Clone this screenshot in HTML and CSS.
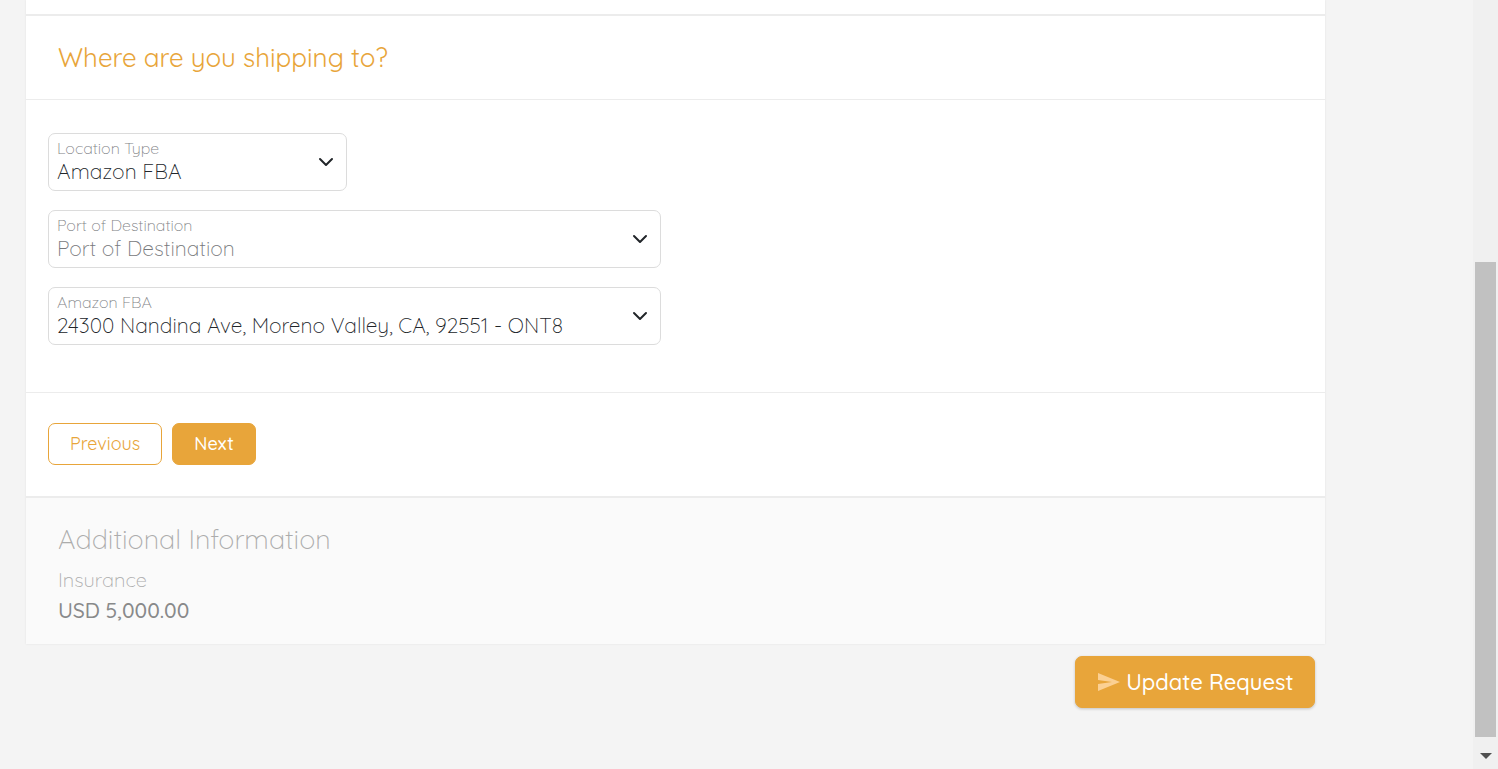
FILE: index.html
```html
<!DOCTYPE html>
<html lang="en">
<head>
  <meta charset="UTF-8">
  <meta name="viewport" content="width=device-width, initial-scale=1">
  <title>Shipping Request</title>
  <link rel="stylesheet" href="styles.css">
</head>
<body>

  <main class="page">
    <div class="card">
      <!-- End of the previous step -->
      <div class="step-end"></div>

      <!-- Destination step -->
      <form class="step">
        <h2 class="step-title">Where are you shipping to?</h2>

        <div class="step-body">
          <div class="field">
            <label for="locationType">Location Type</label>
            <select id="locationType">
              <option>Amazon FBA</option>
            </select>
            <svg class="chevron" viewBox="0 0 16 16"><path d="M2 5l6 6 6-6"/></svg>
          </div>
          <div class="field field-wide">
            <label for="port">Port of Destination</label>
            <select id="port" class="empty">
              <option>Port of Destination</option>
            </select>
            <svg class="chevron" viewBox="0 0 16 16"><path d="M2 5l6 6 6-6"/></svg>
          </div>
          <div class="field field-wide">
            <label for="fba">Amazon FBA</label>
            <select id="fba">
              <option>24300 Nandina Ave, Moreno Valley, CA, 92551 - ONT8</option>
            </select>
            <svg class="chevron" viewBox="0 0 16 16"><path d="M2 5l6 6 6-6"/></svg>
          </div>
        </div>

        <div class="step-footer">
          <button type="button" class="btn btn-outline">Previous</button>
          <button type="button" class="btn btn-primary">Next</button>
        </div>
      </form>

      <!-- Collapsed step -->
      <section class="summary">
        <h2>Additional Information</h2>
        <p class="summary-label">Insurance</p>
        <p class="summary-value">USD 5,000.00</p>
      </section>
    </div>

    <div class="actions">
      <button type="button" class="btn btn-primary btn-large">
        <svg class="send" viewBox="0 0 24 20"><path d="M1 1l22 9-22 9v-7l14-2-14-2z"/></svg>
        Update Request
      </button>
    </div>
  </main>

  <!-- Scrollbar -->
  <div class="scrollbar">
    <div class="thumb"></div>
    <svg class="arrow" viewBox="0 0 12 6"><path d="M0 0h12l-6 6z"/></svg>
  </div>

</body>
</html>
```

FILE: styles.css
```css
* {
  margin: 0;
  padding: 0;
  box-sizing: border-box;
}

body {
  display: flex;
  min-height: 100vh;
  background: #f4f4f4;
  color: #212529;
  font-family: Quicksand, Lato, sans-serif;
  font-weight: 300;
}

.page {
  flex: 1;
  padding: 0 9.85% 0 26px;
}

/* Card with the steps */
.card {
  background: #fff;
  box-shadow: 0 0 2px rgba(0, 0, 0, 0.08);
}

.step-end {
  height: 16px;
  border-bottom: 2px solid #ececec;
}

.step-title {
  padding: 24px 32px;
  border-bottom: 1px solid #ececec;
  color: #e8a53a;
  font-size: 26px;
  font-weight: 400;
  line-height: 35px;
}

.step-body {
  display: grid;
  grid-template-columns: repeat(4, 1fr);
  gap: 19px 15px;
  padding: 33px 37px 47px 22px;
}

/* Select with its label inside the border */
.field {
  position: relative;
  grid-column: 1 / span 1;
}

.field-wide {
  grid-column: 1 / span 2;
}

.field label {
  position: absolute;
  top: 5px;
  left: 9px;
  color: #808285;
  font-size: 16px;
  line-height: 20px;
}

.field select {
  display: block;
  width: 100%;
  height: 58px;
  padding: 18px 40px 0 8px;
  border: 1px solid #dcdcdc;
  border-radius: 7px;
  background: #fff;
  color: #212529;
  font-family: inherit;
  font-size: 21px;
  font-weight: 300;
  appearance: none;
}

.field select.empty {
  color: #77797c;
}

.chevron {
  position: absolute;
  top: 21px;
  right: 13px;
  width: 16px;
  height: 16px;
  fill: none;
  stroke: #212529;
  stroke-width: 2;
  stroke-linecap: round;
  stroke-linejoin: round;
  pointer-events: none;
}

.step-footer {
  display: flex;
  gap: 10px;
  padding: 30px 22px 31px;
  border-top: 1px solid #ececec;
  border-bottom: 2px solid #ececec;
}

/* Buttons */
.btn {
  height: 42px;
  padding: 0 21px 1px;
  border: 1px solid #e8a53a;
  border-radius: 7px;
  font-family: inherit;
  font-size: 18px;
  font-weight: 500;
  cursor: pointer;
}

.btn-outline {
  background: #fff;
  color: #e8a53a;
  font-weight: 400;
}

.btn-primary {
  background: #e8a53a;
  color: #fff;
}

.btn-large {
  display: flex;
  align-items: center;
  gap: 5px;
  height: 52px;
  font-size: 22px;
  box-shadow: 0 1px 3px rgba(0, 0, 0, 0.2);
}

.send {
  width: 24px;
  height: 20px;
  fill: #fbd093;
}

/* Collapsed step */
.summary {
  padding: 24px 32px 19px;
  background: #fafafa;
  color: #acacac;
}

.summary h2 {
  font-size: 27px;
  font-weight: 300;
  line-height: 35px;
}

.summary-label {
  padding-top: 8px;
  font-size: 20px;
  line-height: 30px;
}

.summary-value {
  color: #88898a;
  font-size: 21px;
  font-weight: 500;
  line-height: 30px;
}

.actions {
  display: flex;
  justify-content: flex-end;
  padding: 12px 10px;
}

/* Scrollbar */
.scrollbar {
  display: flex;
  flex-direction: column;
  align-items: center;
  justify-content: flex-end;
  gap: 16px;
  width: 25px;
  padding-bottom: 10px;
  background: #f0f0f0;
}

.thumb {
  width: 21px;
  height: 62.6%;
  background: #c1c1c1;
}

.arrow {
  width: 12px;
  height: 6px;
  fill: #505050;
}
```
